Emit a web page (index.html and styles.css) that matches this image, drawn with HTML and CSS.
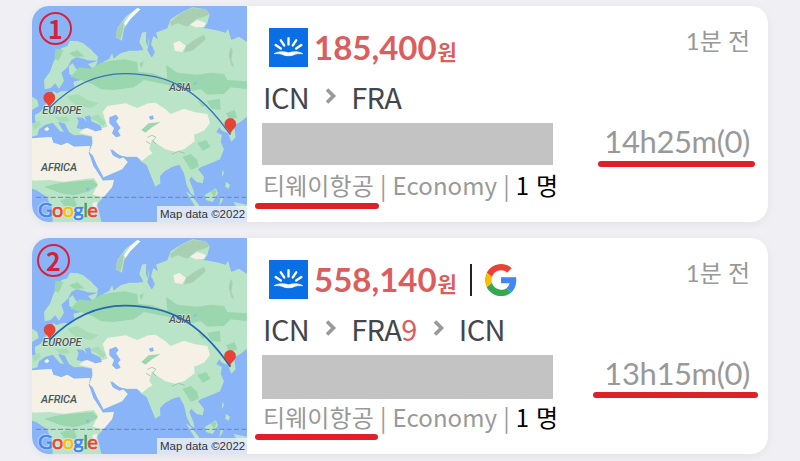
FILE: index.html
```html
<!DOCTYPE html>
<html lang="ko">
<head>
  <meta charset="UTF-8">
  <title>항공권</title>
  <link rel="stylesheet" href="styles.css">
</head>
<body>

  <svg class="defs" width="0" height="0">
    <symbol id="map" viewBox="24 18 645 648" preserveAspectRatio="none">
      <rect x="24" y="18" width="645" height="648" fill="#8ab4f8"/>
      <!-- land -->
      <g fill="#b9e4c7">
        <path d="M24 370L35 368 32 345 50 335 62 318 72 298 86 292 87 272 98 280 112 274 140 272 152 260 148 245 170 240 180 233 150 230 136 222 135 198 146 190 155 205 172 218 190 222 205 205 192 192 222 182 215 198 228 205 238 185 255 178 265 160 268 176 290 160 315 152 340 152 358 150 346 126 354 98 368 95 376 122 370 150 382 172 392 155 381 132 388 108 402 118 396 98 430 85 440 58 470 38 505 22 545 28 557 42 550 70 538 84 575 90 605 98 612 86 622 120 645 110 669 126V350L648 367 630 376 635 412 622 425 612 400 594 392 586 382 577 397 594 405 590 425 600 448 588 478 560 490 530 502 522 508 540 530 536 550 518 546 502 530 496 540 508 570 512 588 500 580 488 555 480 520 466 494 446 500 424 512 408 528 409 550 394 560 382 530 368 495 350 484 340 468 310 470 286 466 266 448 262 450 274 472 296 470 311 486 294 508 238 532 220 498 196 455 206 430 204 410 175 405 150 406 135 396 122 370 102 366 120 396 108 394 86 368 64 374 45 388 40 406 24 410Z"/>
        <path d="M62 268L60 240 78 215 90 182 112 145 130 138 138 122 162 124 178 130 200 148 222 170 220 182 192 181 178 176 158 172 142 180 132 200 112 218 120 242 105 266 94 250 80 264Z"/>
        <path d="M275 112L280 84 305 50 340 24 349 28 320 55 300 86 294 122Z"/>
        <path d="M24 415L82 411 88 428 112 436 130 428 150 440 198 438 194 460 216 504 236 542 270 540 264 562 238 592 220 612 232 666H86L84 624 68 590 36 570 24 566Z"/>
        <path d="M542 585L576 565 582 580 566 606 546 600ZM486 574L500 584 526 616 516 624ZM594 510L600 518 594 532ZM606 545L618 554 614 566 604 560ZM590 590L598 596 586 618ZM628 606L669 614V640L640 624Z"/>
        <path d="M24 290L40 300 44 318 24 330Z"/>
      </g>
      <!-- dry land -->
      <g fill="#f5f1e7">
        <path d="M165 398L188 382 222 388 250 380 236 336 250 318 305 310 340 324 372 310 395 308 425 328 440 342 480 326 510 336 550 342 558 368 540 392 510 404 512 424 480 448 454 455 425 448 400 432 384 418 376 448 386 460 372 468 355 482 338 470 310 470 286 466 264 448 262 454 276 472 296 470 311 486 294 508 238 532 220 498 196 455 206 430 204 408Z"/>
        <path d="M24 415L82 411 88 428 112 436 130 428 150 440 198 438 194 460 216 504 236 542 270 540 264 562 238 592 206 584 222 552 210 534 188 536 120 545 76 540 30 542 24 540Z"/>
        <path d="M448 130L466 122 486 138 474 156 452 152ZM498 74L520 60 545 68 542 80 514 82Z"/>
        <path d="M300 70L318 44 340 24 349 28 320 56 304 78Z" fill="#fff"/>
        <path d="M206 608L220 606 216 622 206 622ZM60 388L70 380 76 388 68 394Z"/>
      </g>
      <!-- forests -->
      <g fill="#9bd7ae">
        <path d="M140 230L165 202 200 206 230 188 260 182 300 178 340 186 342 215 385 220 430 236 426 194 460 218 520 224 560 218 600 222 610 240 669 244V268L620 262 600 282 550 284 530 268 490 276 430 254 360 240 330 262 270 270 230 268 205 252 170 240Z"/>
        <path d="M346 190L360 184 352 205ZM475 470L500 462 520 480 524 500 500 510 488 490ZM520 428L546 420 560 440 536 452ZM548 302L588 296 590 330 562 326ZM606 340L632 330 640 352 618 362ZM60 560L110 548 205 540 222 556 196 574 150 586 110 580ZM108 600L150 592 160 622 120 618ZM94 146L118 150 104 182 92 176ZM136 160L160 150 182 170 150 170ZM560 574L578 568 572 594ZM352 390L374 370 410 366 384 382 364 398ZM520 300L545 318 534 320Z"/>
        <path d="M128 290L160 282 190 300 224 310 200 324 150 312ZM190 354L222 344 246 368 238 378 214 360ZM92 352L128 350 140 362 110 366ZM24 372L46 362 50 376 30 390Z" opacity=".65"/>
      </g>
      <g fill="#a9cfb3">
        <path d="M438 66L470 40 505 24 545 28 557 42 540 50 515 58 490 80 462 70 440 78ZM486 138L510 120 540 104 545 118 508 150 480 158ZM275 112L280 84 300 62 296 92 290 118ZM620 140L626 150 622 180 632 204 622 196 614 165Z"/>
      </g>
      <path d="M370 412L384 406 396 412 386 422 396 432M366 424L380 432M444 462L464 454 482 460" fill="none" stroke="#93b39b" stroke-width="2"/>
      <!-- inland water -->
      <g fill="#8ab4f8">
        <path d="M158 384L164 364 158 352 178 354 188 366 182 350 198 346 202 364 228 376 234 390 214 394 190 384 170 388Z"/>
        <path d="M256 352L276 344 284 354 276 364 290 384 282 392 290 408 276 412 264 400 270 384 256 370Z"/>
        <path d="M194 456L206 466 220 498 238 530 228 528 208 498ZM258 446L270 456 288 466 300 472 286 476 266 466ZM374 350L386 346 390 356 380 360ZM366 92L374 110 372 140 366 126ZM384 140L392 158 384 172ZM508 252L520 244 514 254ZM186 566L196 562 192 574Z"/>
      </g>
      <path d="M36 592H669" stroke="#7080b8" stroke-width="3" stroke-dasharray="15 7"/>
    </symbol>

    <symbol id="pin" viewBox="0 0 38 48">
      <path d="M19 47C18 36 2 30 2 17a17 17 0 0 1 34 0C36 30 20 36 19 47Z" fill="#e94235" stroke="#c5362c" stroke-width="1"/>
    </symbol>

    <symbol id="sun" viewBox="0 0 38 38">
      <rect width="38" height="38" fill="#0a6fe4"/>
      <path d="M6.500 16.500L11.500 20M11.500 12L14.800 17M19 10V16M26.500 12L23.200 17M31.500 16.500L26.500 20" stroke="#fff" stroke-width="2.300" stroke-linecap="round"/>
      <path d="M5 25C10 22.600 14.500 22.800 19 24.200 23.500 22.800 28 22.600 33 25 29 24.800 26.500 24.900 24 26.200 21.500 27.300 16.500 27.300 14 26.200 11.500 24.900 9 24.800 5 25Z" fill="#fff" stroke="#fff" stroke-width=".7"/>
    </symbol>

    <symbol id="google-g" viewBox="0 0 48 48">
      <path fill="#ea4335" d="M24 9.500c3.540 0 6.710 1.220 9.210 3.600l6.850-6.850C35.900 2.380 30.470 0 24 0 14.620 0 6.510 5.380 2.560 13.220l7.980 6.190C12.430 13.720 17.740 9.500 24 9.500z"/>
      <path fill="#4285f4" d="M46.980 24.550c0-1.570-.15-3.090-.38-4.550H24v9.020h12.940c-.58 2.960-2.260 5.480-4.780 7.180l7.730 6c4.510-4.180 7.090-10.360 7.090-17.650z"/>
      <path fill="#fbbc05" d="M10.530 28.590c-.48-1.450-.76-2.990-.76-4.590s.27-3.140.76-4.590l-7.980-6.190C.92 16.460 0 20.120 0 24c0 3.880.92 7.540 2.560 10.780l7.970-6.190z"/>
      <path fill="#34a853" d="M24 48c6.480 0 11.930-2.130 15.890-5.810l-7.730-6c-2.150 1.450-4.920 2.300-8.160 2.300-6.260 0-11.570-4.220-13.470-9.910l-7.980 6.190C6.510 42.620 14.620 48 24 48z"/>
    </symbol>

    <symbol id="arrow" viewBox="0 0 14 18">
      <path d="M3 2.500L9.500 9 3 15.500" fill="none" stroke="#999" stroke-width="3.600"/>
    </symbol>
  </svg>

  <div class="card">
    <div class="map">
      <svg class="world" width="215" height="216" viewBox="24 18 645 648">
        <use href="#map" x="24" y="18" width="645" height="648"/>
        <g class="place">
          <text x="55" y="343" textLength="118">EUROPE</text>
          <text x="435" y="272" textLength="67">ASIA</text>
          <text x="51" y="512" textLength="108">AFRICA</text>
        </g>
        <path class="route-line" d="M76 324C160 240 240 220 305 221C430 222 520 262 619 404"/>
        <use href="#pin" x="57" y="276" width="38" height="48"/>
        <use href="#pin" x="600" y="353" width="38" height="52"/>
      </svg>
      <div class="number">1</div>
      <div class="google"><span class="b">G</span><span class="r">o</span><span class="y">o</span><span class="b">g</span><span class="g">l</span><span class="r">e</span></div>
      <div class="credit">Map data ©2022</div>
    </div>
    <div class="info">
      <div class="top">
        <svg class="logo"><use href="#sun"/></svg>
        <div class="price">185,400<span class="won">원</span></div>
        <div class="ago">1분 전</div>
      </div>
      <div class="route">
        <span>ICN</span>
        <svg class="arrow"><use href="#arrow"/></svg>
        <span>FRA</span>
      </div>
      <div class="middle">
        <div class="blank"></div>
        <div class="duration marked">14h25m(0)</div>
      </div>
      <div class="detail">
        <span class="airline marked">티웨이항공</span><span class="bar">|</span><span class="seat">Economy</span><span class="bar">|</span><span class="people">1 명</span>
      </div>
    </div>
  </div>

  <div class="card second">
    <div class="map">
      <svg class="world" width="215" height="216" viewBox="24 18 645 648">
        <use href="#map" x="24" y="18" width="645" height="648"/>
        <g class="place">
          <text x="55" y="343" textLength="118">EUROPE</text>
          <text x="435" y="272" textLength="67">ASIA</text>
          <text x="51" y="512" textLength="108">AFRICA</text>
        </g>
        <path class="route-line" d="M76 324C160 240 240 220 305 221C430 222 520 262 619 404"/>
        <use href="#pin" x="58" y="276" width="38" height="48"/>
        <use href="#pin" x="599" y="353" width="38" height="52"/>
      </svg>
      <div class="number">2</div>
      <div class="google"><span class="b">G</span><span class="r">o</span><span class="y">o</span><span class="b">g</span><span class="g">l</span><span class="r">e</span></div>
      <div class="credit">Map data ©2022</div>
    </div>
    <div class="info">
      <div class="top">
        <svg class="logo"><use href="#sun"/></svg>
        <div class="price">558,140<span class="won">원</span></div>
        <div class="divider"></div>
        <svg class="google-g"><use href="#google-g"/></svg>
        <div class="ago">1분 전</div>
      </div>
      <div class="route">
        <span>ICN</span>
        <svg class="arrow"><use href="#arrow"/></svg>
        <span>FRA<span class="red">9</span></span>
        <svg class="arrow"><use href="#arrow"/></svg>
        <span>ICN</span>
      </div>
      <div class="middle">
        <div class="blank"></div>
        <div class="duration marked">13h15m(0)</div>
      </div>
      <div class="detail">
        <span class="airline marked">티웨이항공</span><span class="bar">|</span><span class="seat">Economy</span><span class="bar">|</span><span class="people">1 명</span>
      </div>
    </div>
  </div>

</body>
</html>
```
FILE: styles.css
```css
body {
  margin: 0;
  padding: 6px 32px 0;
  height: 455px;
  overflow: hidden;
  background: #efeff4;
  font-family: "Noto Sans CJK KR", sans-serif;
  color: #999;
}
.defs {
  position: absolute;
}
.card {
  display: flex;
  height: 216px;
  margin-bottom: 16px;
  background: #fff;
  border-radius: 17px;
  box-shadow: 0 2px 8px rgba(0, 0, 0, 0.06);
}

/* map */
.map {
  position: relative;
  width: 215px;
  overflow: hidden;
  border-radius: 17px 0 0 17px;
}
.world {
  display: block;
}
.place {
  font: italic 500 33px Roboto, sans-serif;
  fill: #50565a;
  stroke: #e8f3e8;
  stroke-width: 3px;
  paint-order: stroke;
}
.route-line {
  fill: none;
  stroke: #3672bd;
  stroke-width: 4;
}
.second .route-line {
  stroke: #2467b5;
  stroke-width: 5.5;
}
.number {
  position: absolute;
  left: 7px;
  top: 6px;
  width: 29px;
  height: 29px;
  border: 2px solid #d9203a;
  border-radius: 50%;
  font: bold 25px/28px "Noto Sans CJK KR", sans-serif;
  text-align: center;
  color: #d9203a;
}
.second .number {
  left: 5px;
}
.google {
  position: absolute;
  left: 6px;
  bottom: 0;
  font: 20px/26px Lato, sans-serif;
  letter-spacing: -0.6px;
  -webkit-text-stroke: 0.7px;
  text-shadow: 0 0 2px #fff, 0 0 2px #fff;
}
.b { color: #4285f4; }
.r { color: #ea4335; }
.y { color: #fbbc05; }
.g { color: #34a853; }
.credit {
  position: absolute;
  right: 0;
  bottom: 0;
  width: 87px;
  padding-left: 3px;
  height: 16px;
  font: 11.5px/17px "Liberation Sans", sans-serif;
  white-space: nowrap;
  color: #333;
  background: rgba(232, 238, 247, 0.85);
}

/* ticket */
.info {
  flex: 1;
  padding: 22px 18px 0 15px;
}
.top {
  display: flex;
  height: 39px;
  padding-left: 7px;
}
.logo {
  width: 39px;
  height: 39px;
}
.price {
  margin-left: 6px;
  font: bold 33px/38px Lato, "Noto Sans CJK KR", sans-serif;
  color: #dc5d5d;
}
.won {
  margin-left: 1px;
  font-size: 21px;
}
.divider {
  width: 2px;
  height: 32px;
  margin: 4px 13px 0 13px;
  background: #222;
}
.google-g {
  width: 32px;
  height: 32px;
  margin-top: 4px;
}
.ago {
  margin-left: auto;
  font: 24px/26px Lato, "Noto Sans CJK KR", sans-serif;
}
.route {
  display: flex;
  align-items: center;
  height: 40px;
  margin-top: 9px;
  padding-left: 1px;
  font-size: 29px;
  line-height: 40px;
  letter-spacing: -0.6px;
  color: #43464c;
}
.arrow {
  width: 14px;
  height: 18px;
  margin: 0 13px 0 15px;
}
.red {
  color: #dc5d5d;
}
.middle {
  display: flex;
  justify-content: space-between;
  height: 43px;
  margin-top: 7px;
}
.blank {
  width: 291px;
  height: 42px;
  background: #c3c3c3;
}
.second .blank {
  height: 44px;
}
.duration {
  font: 31px/37px Lato, sans-serif;
  letter-spacing: -0.4px;
}
.detail {
  display: flex;
  height: 38px;
  padding-left: 1px;
  font-size: 24px;
  line-height: 38px;
  letter-spacing: 0.1px;
  white-space: pre;
}
.bar {
  margin: 0 6px;
}
.people {
  color: #000;
}

/* red marker lines */
.marked {
  position: relative;
}
.marked::after {
  content: "";
  position: absolute;
  height: 6px;
  border-radius: 3px;
  background: #de2029;
}
.duration::after {
  left: -6px;
  right: -5px;
  top: 38px;
}
.airline::after {
  left: -8px;
  right: -5px;
  top: 37px;
}
.second .duration::after {
  left: -11px;
  right: -8px;
  top: 37px;
}
.second .airline::after {
  right: -4px;
  top: 36px;
}
```
